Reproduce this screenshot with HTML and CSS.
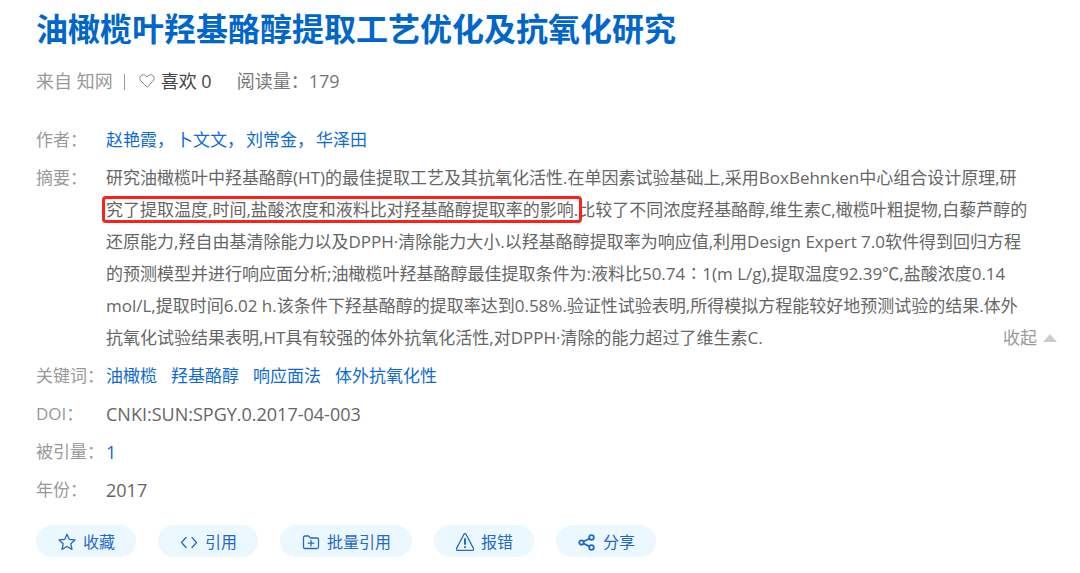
FILE: index.html
```html
<!DOCTYPE html>
<html lang="zh-CN">
<head>
<meta charset="utf-8">
<title>油橄榄叶羟基酪醇提取工艺优化及抗氧化研究</title>
<link rel="stylesheet" href="styles.css">
</head>
<body>
<main class="paper">
  <h1 class="title">油橄榄叶羟基酪醇提取工艺优化及抗氧化研究</h1>
  <div class="meta">
    <span class="source">来自 知网</span>
    <button class="like" type="button">
      <svg class="heart" viewBox="0 0 16 16" aria-hidden="true"><path d="M8 14 2 8C.6 6.500.5 4.300 1.800 2.900c1.400-1.500 3.800-1.500 5.200 0l1 1.100 1-1.100c1.400-1.500 3.800-1.500 5.200 0 1.300 1.400 1.200 3.600-.2 5.100z"/></svg>
      <span>喜欢 0</span>
    </button>
    <span class="reads">阅读量：179</span>
  </div>
  <dl class="fields">
    <dt>作者：</dt>
    <dd class="authors"><a href="#">赵艳霞，</a><a href="#">卜文文，</a><a href="#">刘常金，</a><a href="#">华泽田</a></dd>
    <dt>摘要：</dt>
    <dd class="abstract">
      <p>研究油橄榄叶中羟基酪醇(HT)的最佳提取工艺及其抗氧化活性.在单因素试验基础上,采用BoxBehnken中心组合设计原理,研<br><span class="mark">究了提取温度,时间,盐酸浓度和液料比对羟基酪醇提取率的影响.</span>比较了不同浓度羟基酪醇,维生素C,橄榄叶粗提物,白藜芦醇的<br>还原能力,羟自由基清除能力以及DPPH·清除能力大小.以羟基酪醇提取率为响应值,利用Design Expert 7.0软件得到回归方程<br>的预测模型并进行响应面分析;油橄榄叶羟基酪醇最佳提取条件为:液料比50.74∶1(m L/g),提取温度92.39℃,盐酸浓度0.14<br>mol/L,提取时间6.02 h.该条件下羟基酪醇的提取率达到0.58%.验证性试验表明,所得模拟方程能较好地预测试验的结果.体外<br>抗氧化试验结果表明,HT具有较强的体外抗氧化活性,对DPPH·清除的能力超过了维生素C.</p>
      <button class="fold" type="button">收起</button>
    </dd>
    <dt>关键词：</dt>
    <dd class="keywords"><a href="#">油橄榄</a><a href="#">羟基酪醇</a><a href="#">响应面法</a><a href="#">体外抗氧化性</a></dd>
    <dt>DOI：</dt>
    <dd class="value">CNKI:SUN:SPGY.0.2017-04-003</dd>
    <dt>被引量：</dt>
    <dd class="value"><a href="#">1</a></dd>
    <dt>年份：</dt>
    <dd class="value">2017</dd>
  </dl>
  <div class="actions">
    <button type="button"><svg viewBox="0 0 18 18" aria-hidden="true"><path d="m9 1.200 2.300 5.200 5.700.6-4.200 3.800 1.200 5.600L9 13.500l-5 2.900 1.200-5.600L1 7l5.700-.6z"/></svg>收藏</button>
    <button type="button"><svg viewBox="0 0 18 18" aria-hidden="true"><path d="M6 4.500 1.500 9.500 6 14.500M12 4.500l4.500 5-4.500 5"/></svg>引用</button>
    <button type="button"><svg viewBox="0 0 18 18" aria-hidden="true"><path d="M1.500 14V4.500Q1.500 3 3 3h3.500l2 2H15q1.500 0 1.500 1.500V14q0 1.500-1.500 1.500H3Q1.500 15.500 1.500 14zM9 7.500v5.500M6.200 10.200h5.600"/></svg>批量引用</button>
    <button type="button"><svg viewBox="0 0 18 18" aria-hidden="true"><path d="M8 1.200.4 15.700Q0 17.300 1.500 17.300h15q1.500 0 1.100-1.600L10 1.200Q9 0 8 1.200z"/><path class="bold" d="M9 6v5M9 14v.2"/></svg>报错</button>
    <button type="button"><svg class="share" viewBox="0 0 18 18" aria-hidden="true"><circle cx="3.500" cy="9.500" r="2.200"/><circle cx="13.500" cy="4.500" r="2.300"/><circle cx="13.500" cy="14.500" r="2.300"/><path d="m5.600 8.500 5.700-2.800M5.600 10.500l5.700 2.900"/></svg>分享</button>
  </div>
</main>
</body>
</html>
```
FILE: styles.css
```css
* {
  box-sizing: border-box;
}

body {
  margin: 0;
  background: #fff;
  color: #666;
  font: 17px/32px "Open Sans", "Noto Sans CJK SC", sans-serif;
}

button {
  margin: 0;
  padding: 0;
  border: 0;
  background: none;
  color: inherit;
  font: inherit;
  cursor: pointer;
}

a {
  color: #0f6bd0;
  text-decoration: none;
}

svg {
  flex: none;
  fill: none;
  stroke: currentColor;
  stroke-linecap: round;
  stroke-linejoin: round;
}

.paper {
  padding: 7px 23px 16px 36px;
}

.title {
  margin: 0 0 14px;
  color: #0066cc;
  font-size: 32px;
  line-height: 44px;
  font-weight: 700;
}

.meta {
  display: flex;
  align-items: center;
  font-size: 18px;
}

.source {
  color: #999;
}

.source::after {
  content: "";
  display: inline-block;
  width: 1px;
  height: 16px;
  margin: 0 14px 0 11px;
  background: #999;
  vertical-align: -2px;
}

.like {
  display: flex;
  align-items: center;
  gap: 6px;
  color: #444;
}

.heart {
  width: 16px;
  height: 16px;
  color: #888;
}

.reads {
  margin-left: 25px;
  color: #777;
}

.fields {
  display: grid;
  grid-template-columns: 70px 1fr;
  row-gap: 6px;
  margin: 27px 0 19px;
}

.fields dt {
  color: #999;
  white-space: nowrap;
}

.fields dd {
  margin: 0;
}

.fields .value {
  font-size: 18px;
}

.authors {
  display: flex;
  flex-wrap: wrap;
  column-gap: 2px;
}

.keywords {
  display: flex;
  flex-wrap: wrap;
  column-gap: 14px;
}

.abstract {
  display: grid;
}

.abstract p {
  grid-area: 1 / 1;
  margin: 0;
}

.mark {
  margin: 0 -2px;
  padding: 0 2px;
  border-radius: 2px;
  outline: 3px solid #fb2318;
  outline-offset: -1px;
}

.fold {
  display: flex;
  align-items: center;
  gap: 6px;
  grid-area: 1 / 1;
  place-self: end;
  color: #999;
}

.fold::after {
  content: "";
  border: 7px solid transparent;
  border-top: 0;
  border-bottom: 8px solid #ccc;
}

.actions {
  display: flex;
  flex-wrap: wrap;
  gap: 22px;
}

.actions button {
  display: flex;
  align-items: center;
  gap: 7px;
  padding: 2px 21px 0 22px;
  border-radius: 16px;
  background: #ecf8ff;
  color: #2468c8;
  font-size: 16px;
  line-height: 30px;
}

.actions svg {
  width: 18px;
  height: 18px;
  stroke-width: 1.3;
}

.actions .share {
  stroke-width: 1.8;
}

.actions .bold {
  stroke-width: 2;
}
```
